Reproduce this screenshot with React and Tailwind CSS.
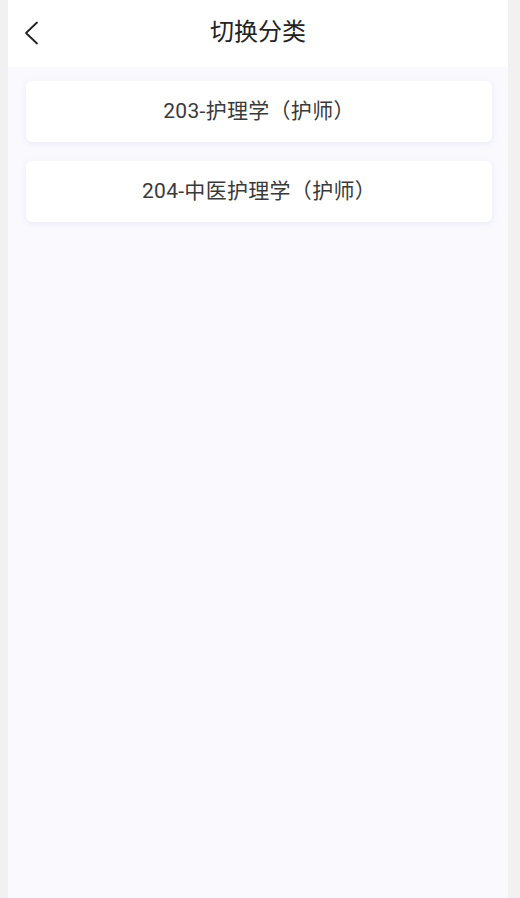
import React from "react";

const items = ["203-护理学（护师）", "204-中医护理学（护师）"];

const BackIcon = () => (
  <svg width="16" height="24" viewBox="0 0 16 24" fill="none">
    <path
      d="M14 1.5 L3 12 L14 22.5"
      stroke="#222"
      strokeWidth="1.8"
      strokeLinecap="round"
      strokeLinejoin="round"
    />
  </svg>
);

export default function App() {
  return (
    <div
      className="min-h-[898px] bg-[#f1f1f2] pl-2 pr-3 flex"
      style={{ fontFamily: 'Roboto, "Noto Sans CJK SC", sans-serif' }}
    >
      <div className="flex-1 flex flex-col bg-[#f9f9fe]">
        {/* Header */}
        <div className="relative h-[67px] bg-white flex items-center justify-center">
          <button className="absolute left-[15px] top-[21px]">
            <BackIcon />
          </button>
          <h1 className="text-[24px] text-[#222] leading-none -mt-[3px]">
            切换分类
          </h1>
        </div>

        {/* List */}
        <div className="flex flex-col gap-[19px] pt-[14px] pl-[18px] pr-[16px]">
          {items.map((item) => (
            <div
              key={item}
              className="h-[61px] bg-white rounded-md shadow-[0_2px_6px_rgba(200,205,225,0.25)] flex items-center justify-center text-[21px] tracking-[0.3px] text-[#3a3a3a]"
            >
              {item}
            </div>
          ))}
        </div>
      </div>
    </div>
  );
}
